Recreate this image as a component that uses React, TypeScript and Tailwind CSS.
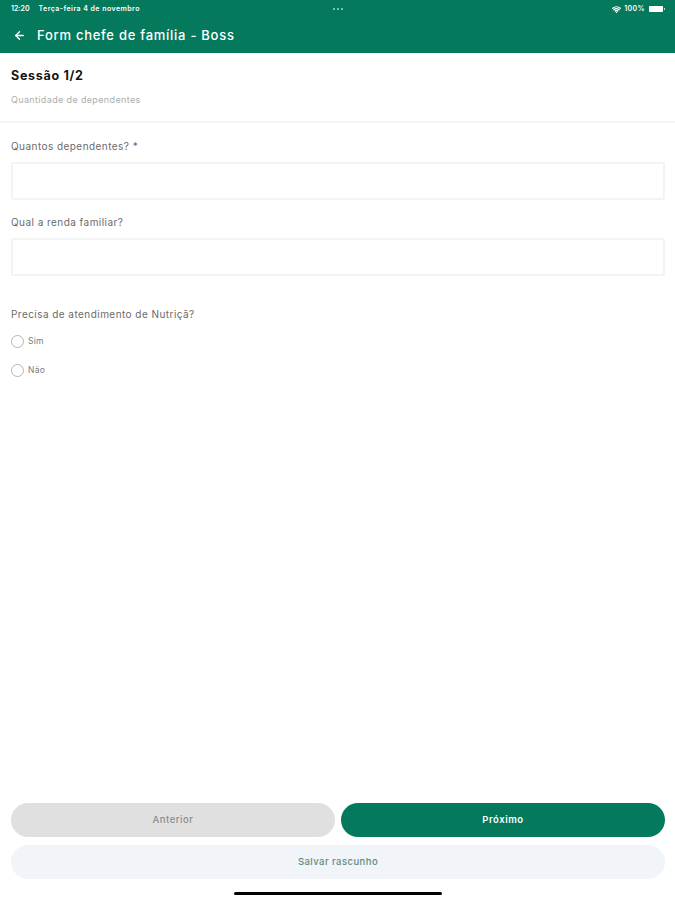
import { ArrowLeft, Wifi } from 'lucide-react';

function Field({ label }: { label: string }) {
	return (
		<div>
			<p className="h-[15px] text-[10px] leading-[15px] tracking-[0.45px] text-[#6b6b6b]">{label}</p>
			<div className="mt-[8px] h-[38px] rounded-[2px] border-2 border-[#f3f3f3] bg-white" />
		</div>
	);
}

function Radio({ label }: { label: string }) {
	return (
		<div className="flex h-[13px] items-center gap-[4px]">
			<div className="h-[13px] w-[13px] rounded-full border border-[#b5b5b5] bg-white" />
			<span className="text-[8.5px] tracking-[0.3px] text-[#7a7a7a]">{label}</span>
		</div>
	);
}

export default function App() {
	return (
		<div className="flex h-[900px] w-[675px] flex-col overflow-hidden bg-white font-['Inter',sans-serif]">
			<header className="h-[53px] shrink-0 bg-[#04795c] text-white">
				<div className="flex h-[16px] items-center justify-between pt-[2px] pr-[10px] pl-[11px] text-[7px] font-semibold">
					<div className="flex w-[200px] gap-[9px]">
						<span>12:20</span>
						<span className="tracking-[0.45px]">Terça-feira 4 de novembro</span>
					</div>
					<div className="flex gap-[2px]">
						<div className="h-[2px] w-[2px] rounded-full bg-[#9fd8c8]" />
						<div className="h-[2px] w-[2px] rounded-full bg-[#9fd8c8]" />
						<div className="h-[2px] w-[2px] rounded-full bg-[#9fd8c8]" />
					</div>
					<div className="flex w-[200px] items-center justify-end gap-[3px]">
						<Wifi size={9} strokeWidth={3.5} />
						<span className="tracking-[0.4px]">100%</span>
						<div className="ml-px flex items-center">
							<div className="h-[6px] w-[14px] rounded-[1px] bg-white" />
							<div className="ml-px h-[2px] w-px bg-white/70" />
						</div>
					</div>
				</div>
				<div className="mt-[3px] flex h-[33px] items-center pl-[13px]">
					<ArrowLeft size={13} strokeWidth={2.5} />
					<span className="ml-[11px] text-[13px] font-medium tracking-[0.73px]">Form chefe de família - Boss</span>
				</div>
			</header>

			<section className="h-[70px] shrink-0 border-b-2 border-[#f5f5f5] px-[11px] pt-[15px]">
				<h1 className="text-[12.5px] leading-[16px] font-bold tracking-[0.7px] text-[#141414]">Sessão 1/2</h1>
				<p className="mt-[10px] text-[9px] leading-[12px] tracking-[0.36px] text-[#adadad]">Quantidade de dependentes</p>
			</section>

			<main className="flex flex-1 flex-col pt-[16px] pr-[10px] pl-[11px]">
				<div className="flex flex-col gap-[15px]">
					<Field label="Quantos dependentes? *" />
					<Field label="Qual a renda familiar?" />
				</div>
				<p className="mt-[31px] h-[15px] text-[10px] leading-[15px] tracking-[0.45px] text-[#6b6b6b]">Precisa de atendimento de Nutriçã?</p>
				<div className="mt-[13px] flex flex-col gap-[16px]">
					<Radio label="Sim" />
					<Radio label="Não" />
				</div>
			</main>

			<footer className="flex shrink-0 flex-col gap-[8px] pr-[10px] pl-[11px]">
				<div className="flex gap-[6px]">
					<button className="h-[34px] flex-1 rounded-full bg-[#e0e0e0] pt-px text-[9.5px] font-medium tracking-[0.55px] text-[#8c8c8c]">Anterior</button>
					<button className="h-[34px] flex-1 rounded-full bg-[#04795c] pt-px text-[9.5px] font-semibold tracking-[0.55px] text-white">Próximo</button>
				</div>
				<button className="h-[34px] rounded-full bg-[#f1f4f8] pt-px text-[9.5px] font-medium tracking-[0.45px] text-[#5f8d80]">Salvar rascunho</button>
			</footer>
			<div className="flex h-[21px] shrink-0 items-start justify-center pt-[12.5px]">
				<div className="h-[3px] w-[208px] rounded-full bg-black" />
			</div>
		</div>
	);
}
